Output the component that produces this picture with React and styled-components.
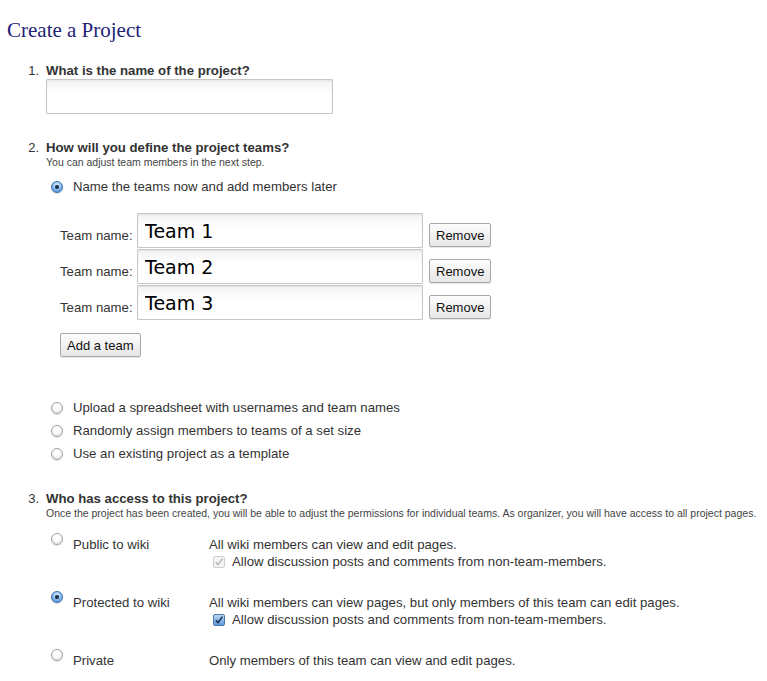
import React from 'react'
import styled, { createGlobalStyle, css } from 'styled-components'

const GlobalStyle = createGlobalStyle`
  body {
    margin: 0;
    background: #fff;
    font-family: "Liberation Sans", Arial, sans-serif;
    color: #333;
  }
`

const Page = styled.div`
  padding: 0 0 20px 7px;
  width: 760px;
`

const Title = styled.h1`
  font-family: "Liberation Serif", "Times New Roman", serif;
  font-weight: normal;
  font-size: 21px;
  color: #222277;
  margin: 0;
  padding-top: 17px;
  line-height: 26px;
`

const Steps = styled.div`
  display: flex;
  flex-direction: column;
`

const Step = styled.div`
  display: flex;
  margin-top: ${(p) => p.top}px;
`

const Num = styled.div`
  flex-shrink: 0;
  width: 32px;
  text-align: right;
  padding-right: 7px;
  font-size: 13px;
  line-height: 16px;
`

const StepBody = styled.div`
  flex: 1;
  min-width: 0;
  display: flex;
  flex-direction: column;
`

const Question = styled.div`
  font-size: 13.2px;
  font-weight: bold;
  line-height: 16px;
`

const Hint = styled.div`
  font-size: 10.5px;
  line-height: 13px;
  color: #444;
  white-space: nowrap;
`

const TextBox = styled.input`
  box-sizing: border-box;
  width: ${(p) => p.w}px;
  height: 35px;
  border: 1px solid #c6c6c6;
  border-radius: 1px;
  background: linear-gradient(#f1f1f3, #fff 40%);
  box-shadow: inset 0 1px 2px rgba(0, 0, 0, 0.06);
  padding: 0 7px;
  font-family: "DejaVu Sans", "Lucida Grande", sans-serif;
  font-size: 19px;
  color: #000;
  outline: none;
`

const Options = styled.div`
  display: flex;
  flex-direction: column;
  margin-top: ${(p) => p.top || 0}px;
  padding-left: 5px;
`

const OptionRow = styled.label`
  display: flex;
  align-items: center;
  height: 23px;
  font-size: 13.2px;
  color: #333;
`

const Radio = styled.span`
  box-sizing: border-box;
  display: inline-flex;
  align-items: center;
  justify-content: center;
  width: 12px;
  height: 12px;
  border-radius: 50%;
  margin-right: 10px;
  flex-shrink: 0;
  border: 1px solid #a2a2a2;
  background: radial-gradient(circle at 50% 35%, #fff 30%, #dcdcdc 100%);
  box-shadow: 0 1px 1px rgba(0, 0, 0, 0.12);
  ${(p) =>
    p.on &&
    css`
      border-color: #3a6ea8;
      background: radial-gradient(circle at 50% 30%, #c8e2fb 10%, #6aa6e4 70%, #3f7dc6 100%);
      &::after {
        content: '';
        width: 4px;
        height: 4px;
        border-radius: 50%;
        background: #1b2b40;
      }
    `}
`

const Teams = styled.div`
  display: flex;
  flex-direction: column;
  gap: 1px;
  margin-top: 15px;
  padding-left: 14px;
`

const TeamRow = styled.div`
  display: flex;
  align-items: flex-end;
`

const TeamLabel = styled.span`
  font-size: 13.2px;
  width: 77px;
  padding-bottom: 5px;
`

const Button = styled.button`
  box-sizing: border-box;
  height: 24px;
  padding: 0 6px;
  font-family: "Liberation Sans", Arial, sans-serif;
  font-size: 13px;
  color: #111;
  border: 1px solid #a9a9a9;
  border-radius: 2px;
  background: linear-gradient(#fdfdfd, #e6e6e6);
  box-shadow: 0 1px 1px rgba(0, 0, 0, 0.1);
  margin-left: ${(p) => p.left || 0}px;
  margin-bottom: ${(p) => p.bottom || 0}px;
`

const RemoveButton = styled(Button)`
  align-self: flex-end;
`

const AddRow = styled.div`
  margin-top: 13px;
  padding-left: 14px;
  display: flex;
`

const Access = styled.div`
  display: flex;
  flex-direction: column;
  gap: 24px;
  margin-top: 16px;
  padding-left: 5px;
`

const AccessRow = styled.div`
  display: grid;
  grid-template-columns: 22px 136px 1fr;
  font-size: 13.2px;
  line-height: 17px;
`

const AccessRadio = styled(Radio)`
  margin-top: -3px;
`

const Desc = styled.div`
  display: flex;
  flex-direction: column;
`

const CheckLine = styled.div`
  display: flex;
  align-items: center;
  padding-left: 4px;
`

const Check = styled.span`
  box-sizing: border-box;
  width: 12px;
  height: 12px;
  margin-right: 7px;
  border-radius: 2px;
  display: inline-flex;
  align-items: center;
  justify-content: center;
  border: 1px solid ${(p) => (p.disabled ? '#cfcfcf' : '#4a79b0')};
  background: ${(p) =>
    p.disabled ? '#f4f4f4' : 'linear-gradient(#bcd8f5, #5f9ad8)'};
`

function CheckMark({ color }) {
  return (
    <svg width="10" height="10" viewBox="0 0 10 10">
      <path d="M1.8 5.2 L4 7.6 L8.4 1.6" fill="none" stroke={color} strokeWidth="1.6" />
    </svg>
  )
}

const teams = ['Team 1', 'Team 2', 'Team 3']

const accessOptions = [
  {
    label: 'Public to wiki',
    text: 'All wiki members can view and edit pages.',
    check: 'disabled',
  },
  {
    label: 'Protected to wiki',
    text: 'All wiki members can view pages, but only members of this team can edit pages.',
    check: 'on',
    selected: true,
  },
  {
    label: 'Private',
    text: 'Only members of this team can view and edit pages.',
  },
]

export default function App() {
  return (
    <React.Fragment>
      <GlobalStyle />
      <Page>
        <Title>Create a Project</Title>
        <Steps>
          <Step top={20}>
            <Num>1.</Num>
            <StepBody>
              <Question>What is the name of the project?</Question>
              <TextBox w={287} />
            </StepBody>
          </Step>

          <Step top={26}>
            <Num>2.</Num>
            <StepBody>
              <Question>How will you define the project teams?</Question>
              <Hint>You can adjust team members in the next step.</Hint>
              <Options top={6}>
                <OptionRow>
                  <Radio on />
                  Name the teams now and add members later
                </OptionRow>
              </Options>
              <Teams>
                {teams.map((t) => (
                  <TeamRow key={t}>
                    <TeamLabel>Team name:</TeamLabel>
                    <TextBox w={286} defaultValue={t} />
                    <RemoveButton left={6} bottom={1}>
                      Remove
                    </RemoveButton>
                  </TeamRow>
                ))}
              </Teams>
              <AddRow>
                <Button>Add a team</Button>
              </AddRow>
              <Options top={39}>
                <OptionRow>
                  <Radio />
                  Upload a spreadsheet with usernames and team names
                </OptionRow>
                <OptionRow>
                  <Radio />
                  Randomly assign members to teams of a set size
                </OptionRow>
                <OptionRow>
                  <Radio />
                  Use an existing project as a template
                </OptionRow>
              </Options>
            </StepBody>
          </Step>

          <Step top={26}>
            <Num>3.</Num>
            <StepBody>
              <Question>Who has access to this project?</Question>
              <Hint>
                Once the project has been created, you will be able to adjust the permissions for
                individual teams. As organizer, you will have access to all project pages.
              </Hint>
              <Access>
                {accessOptions.map((o) => (
                  <AccessRow key={o.label}>
                    <AccessRadio on={o.selected} />
                    <span>{o.label}</span>
                    <Desc>
                      <span>{o.text}</span>
                      {o.check && (
                        <CheckLine>
                          <Check disabled={o.check === 'disabled'}>
                            <CheckMark color={o.check === 'disabled' ? '#b8b8b8' : '#1b2e4a'} />
                          </Check>
                          Allow discussion posts and comments from non-team-members.
                        </CheckLine>
                      )}
                    </Desc>
                  </AccessRow>
                ))}
              </Access>
            </StepBody>
          </Step>
        </Steps>
      </Page>
    </React.Fragment>
  )
}
